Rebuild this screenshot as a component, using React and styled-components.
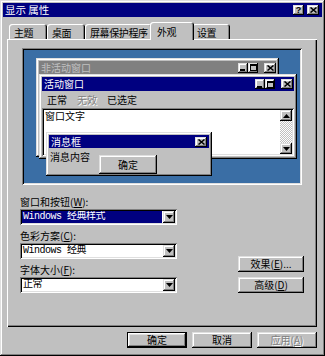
import React from 'react';
import styled, { createGlobalStyle, css } from 'styled-components';

const CJK = `"Noto Sans CJK SC", "Liberation Sans", sans-serif`;
const MONO = `"Liberation Mono", "Noto Sans CJK SC", monospace`;

const Global = createGlobalStyle`
  html, body { margin: 0; padding: 0; background: #c0c0c0; }
  body { font-family: ${CJK}; font-size: 10px; color: #000; }
  * { box-sizing: border-box; }
  u { text-decoration: underline; text-underline-offset: 1px; }
`;

const raised = css`
  box-shadow: inset -1px -1px #000, inset 1px 1px #dfdfdf, inset -2px -2px #808080, inset 2px 2px #fff;
`;
const sunken = css`
  box-shadow: inset 1px 1px #808080, inset -1px -1px #fff, inset 2px 2px #000, inset -2px -2px #dfdfdf;
`;

const Window = styled.div`
  width: 325px;
  height: 356px;
  background: #c0c0c0;
  ${raised};
  padding: 3px;
  display: flex;
  flex-direction: column;
`;

const TitleBar = styled.div`
  height: 14px;
  background: #000080;
  color: #fff;
  display: flex;
  align-items: center;
  justify-content: space-between;
  padding: 0 3px 0 2px;
  font-size: 10.5px;
  line-height: 14px;
`;

const TitleButtons = styled.div`
  display: flex;
  gap: 3px;
  align-items: center;
`;

const CapBtn = styled.div`
  width: ${(p) => p.$w}px;
  height: ${(p) => p.$h}px;
  background: #c0c0c0;
  ${raised};
  display: flex;
  align-items: center;
  justify-content: center;
  color: #000;
  font-family: "Liberation Sans", sans-serif;
  font-weight: bold;
  font-size: 9px;
  line-height: 1;
`;

const Content = styled.div`
  flex: 1;
  padding: 5px 5px 0 4px;
  display: flex;
  flex-direction: column;
`;

const TabStrip = styled.div`
  height: 17px;
  display: flex;
  align-items: flex-end;
  padding-left: 2px;
  position: relative;
  z-index: 2;
`;

const Tab = styled.div`
  width: ${(p) => (p.$active ? p.$w + 4 : p.$w)}px;
  height: ${(p) => (p.$active ? 18 : 15)}px;
  margin: ${(p) => (p.$active ? '0 -2px -1px' : '0')};
  padding-left: ${(p) => (p.$active ? 7 : 5)}px;
  padding-top: ${(p) => (p.$active ? 0 : 1)}px;
  background: #c0c0c0;
  border-radius: 3px 3px 0 0;
  box-shadow: inset 1px 1px #fff, inset -1px 0 #000, inset -2px 0 #808080;
  display: flex;
  align-items: center;
  position: relative;
  z-index: ${(p) => (p.$active ? 2 : 1)};
  white-space: nowrap;
  letter-spacing: -0.4px;
`;

const Panel = styled.div`
  height: 288px;
  background: #c0c0c0;
  box-shadow: inset 1px 1px #fff, inset -1px -1px #000, inset -2px -2px #808080;
  padding: 9px 13px 0 13px;
  position: relative;
  z-index: 1;
`;

const Preview = styled.div`
  position: relative;
  margin-left: 2px;
  width: 280px;
  height: 137px;
  background: #3a6ea5;
  ${sunken};
`;

const MiniWindow = styled.div`
  position: absolute;
  left: ${(p) => p.$x}px;
  top: ${(p) => p.$y}px;
  width: ${(p) => p.$w}px;
  height: ${(p) => p.$h}px;
  background: #c0c0c0;
  ${raised};
  padding: 3px;
  display: flex;
  flex-direction: column;
`;

const MiniTitle = styled.div`
  height: ${(p) => p.$h}px;
  flex: none;
  background: ${(p) => (p.$inactive ? '#808080' : '#000080')};
  color: ${(p) => (p.$inactive ? '#c0c0c0' : '#fff')};
  display: flex;
  align-items: center;
  justify-content: space-between;
  padding: 0 ${(p) => p.$pr}px 0 2px;
  font-size: 10px;
  line-height: 12px;
`;

const CapGroup = styled.div`
  display: flex;
  align-items: center;
`;

const CapGap = styled.div`
  width: 6px;
`;

const MenuRow = styled.div`
  height: 16px;
  display: flex;
  align-items: center;
  gap: 10px;
  padding-left: 5px;
`;

const MenuItem = styled.span`
  color: ${(p) => (p.$disabled ? '#808080' : '#000')};
  text-shadow: ${(p) => (p.$disabled ? '1px 1px #fff' : 'none')};
`;

const TextArea = styled.div`
  flex: 1;
  margin-top: 1px;
  background: #fff;
  ${sunken};
  padding: 2px;
  display: flex;
`;

const TextBody = styled.div`
  flex: 1;
  padding: 0 1px;
  line-height: 12px;
`;

const ScrollBar = styled.div`
  width: 12px;
  display: flex;
  flex-direction: column;
  justify-content: space-between;
  background: repeating-conic-gradient(#c0c0c0 0 25%, #fff 0 50%) 0 0 / 2px 2px;
`;

const ScrollBtn = styled.div`
  height: 11px;
  background: #c0c0c0;
  ${raised};
  display: flex;
  align-items: center;
  justify-content: center;
`;

const MsgBody = styled.div`
  flex: 1;
  display: flex;
  align-items: flex-start;
  padding: 3px 0 0 1px;
  line-height: 12px;
`;

const Button = styled.div`
  width: ${(p) => p.$w}px;
  height: ${(p) => p.$h || 16}px;
  flex: none;
  background: #c0c0c0;
  ${(p) =>
    p.$default
      ? css`
          box-shadow: inset 0 0 0 1px #000, inset -2px -2px #000, inset 2px 2px #fff, inset -3px -3px #808080, inset 3px 3px #dfdfdf;
        `
      : raised};
  display: flex;
  align-items: center;
  justify-content: center;
  line-height: 12px;
  color: ${(p) => (p.$disabled ? '#808080' : '#000')};
  text-shadow: ${(p) => (p.$disabled ? '1px 1px #fff' : 'none')};
  white-space: nowrap;
`;

const MsgButton = styled(Button)`
  margin: 4px 0 0 9px;
`;

const Controls = styled.div`
  margin-top: 11px;
  display: grid;
  grid-template-columns: 157px 1fr;
`;

const Fields = styled.div`
  display: flex;
  flex-direction: column;
`;

const Label = styled.div`
  height: 12px;
  line-height: 12px;
  margin: ${(p) => (p.$first ? '0' : '5px')} 0 1px;
  white-space: nowrap;
`;

const Select = styled.div`
  width: 157px;
  height: 16px;
  background: #fff;
  ${sunken};
  padding: 2px;
  display: flex;
`;

const SelectValue = styled.div`
  flex: 1;
  margin-right: 1px;
  background: ${(p) => (p.$selected ? '#000080' : 'transparent')};
  color: ${(p) => (p.$selected ? '#fff' : '#000')};
  font-family: ${MONO};
  font-size: 10px;
  letter-spacing: -0.5px;
  line-height: 12px;
  padding-left: 1px;
  white-space: nowrap;
  overflow: hidden;
`;

const SelectArrow = styled.div`
  width: 12px;
  height: 12px;
  background: #c0c0c0;
  ${raised};
  display: flex;
  align-items: center;
  justify-content: center;
`;

const SideButtons = styled.div`
  display: flex;
  flex-direction: column;
  align-items: flex-end;
  justify-content: flex-end;
  gap: 5px;
`;

const Footer = styled.div`
  margin-top: 5px;
  display: flex;
  justify-content: flex-end;
  gap: 5px;
`;

const Close = () => (
  <svg width="7" height="6" viewBox="0 0 7 6">
    <path d="M0.5 0.5L6.5 5.5M6.5 0.5L0.5 5.5" stroke="#000" strokeWidth="1.5" />
  </svg>
);
const Min = () => (
  <svg width="6" height="7" viewBox="0 0 6 7">
    <rect x="0" y="5" width="5" height="2" fill="#000" />
  </svg>
);
const Max = () => (
  <svg width="7" height="7" viewBox="0 0 7 7">
    <rect x="0.5" y="0.5" width="6" height="6" fill="none" stroke="#000" strokeWidth="1" />
    <rect x="0" y="0" width="7" height="2" fill="#000" />
  </svg>
);
const Down = () => (
  <svg width="7" height="4" viewBox="0 0 7 4">
    <path d="M0 0H7L3.5 4Z" fill="#000" />
  </svg>
);
const Up = () => (
  <svg width="7" height="4" viewBox="0 0 7 4">
    <path d="M0 4H7L3.5 0Z" fill="#000" />
  </svg>
);

const Caps = ({ closeW = 12 }) => (
  <CapGroup>
    <CapBtn $w={10} $h={10}><Min /></CapBtn>
    <CapBtn $w={10} $h={10}><Max /></CapBtn>
    <CapGap />
    <CapBtn $w={closeW} $h={10}><Close /></CapBtn>
  </CapGroup>
);

const tabs = [
  { label: '主题', w: 38 },
  { label: '桌面', w: 38 },
  { label: '屏幕保护程序', w: 67 },
  { label: '外观', w: 40, active: true },
  { label: '设置', w: 38 },
];

export default function App() {
  return (
    <>
      <Global />
      <Window>
        <TitleBar>
          <span>显示 属性</span>
          <TitleButtons>
            <CapBtn $w={11} $h={10}>?</CapBtn>
            <CapBtn $w={12} $h={10}><Close /></CapBtn>
          </TitleButtons>
        </TitleBar>
        <Content>
          <TabStrip>
            {tabs.map((t) => (
              <Tab key={t.label} $w={t.w} $active={t.active}>{t.label}</Tab>
            ))}
          </TabStrip>
          <Panel>
            <Preview>
              <MiniWindow $x={14} $y={10} $w={243} $h={99}>
                <MiniTitle $inactive $h={13} $pr={0}>
                  <span>非活动窗口</span>
                  <Caps />
                </MiniTitle>
              </MiniWindow>
              <MiniWindow $x={17} $y={26} $w={258} $h={85}>
                <MiniTitle $h={14} $pr={1}>
                  <span>活动窗口</span>
                  <Caps />
                </MiniTitle>
                <MenuRow>
                  <MenuItem>正常</MenuItem>
                  <MenuItem $disabled>无效</MenuItem>
                  <MenuItem>已选定</MenuItem>
                </MenuRow>
                <TextArea>
                  <TextBody>窗口文字</TextBody>
                  <ScrollBar>
                    <ScrollBtn><Up /></ScrollBtn>
                    <ScrollBtn><Down /></ScrollBtn>
                  </ScrollBar>
                </TextArea>
              </MiniWindow>
              <MiniWindow $x={24} $y={84} $w={166} $h={44}>
                <MiniTitle $h={13} $pr={2}>
                  <span>消息框</span>
                  <CapBtn $w={12} $h={10}><Close /></CapBtn>
                </MiniTitle>
                <MsgBody>
                  <span>消息内容</span>
                  <MsgButton $w={58} $h={19}>确定</MsgButton>
                </MsgBody>
              </MiniWindow>
            </Preview>
            <Controls>
              <Fields>
                <Label $first>窗口和按钮(<u>W</u>):</Label>
                <Select>
                  <SelectValue $selected>Windows 经典样式</SelectValue>
                  <SelectArrow><Down /></SelectArrow>
                </Select>
                <Label>色彩方案(<u>C</u>):</Label>
                <Select>
                  <SelectValue>Windows 经典</SelectValue>
                  <SelectArrow><Down /></SelectArrow>
                </Select>
                <Label>字体大小(<u>F</u>):</Label>
                <Select>
                  <SelectValue>正常</SelectValue>
                  <SelectArrow><Down /></SelectArrow>
                </Select>
              </Fields>
              <SideButtons>
                <Button $w={66}>效果(<u>E</u>)...</Button>
                <Button $w={66}>高级(<u>D</u>)</Button>
              </SideButtons>
            </Controls>
          </Panel>
          <Footer>
            <Button $w={60} $default>确定</Button>
            <Button $w={60}>取消</Button>
            <Button $w={60} $disabled>应用(<u>A</u>)</Button>
          </Footer>
        </Content>
      </Window>
    </>
  );
}
